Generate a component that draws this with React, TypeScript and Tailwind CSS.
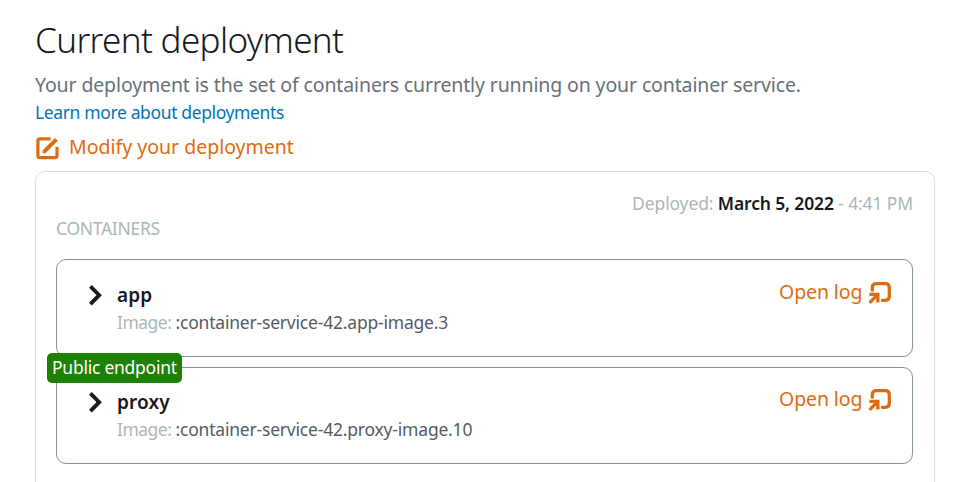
function EditIcon() {
  return (
    <svg className="block shrink-0" width="24" height="24" viewBox="0 0 24 24" fill="none" stroke="#dd6b10">
      <path d="M15.6 1.9H4.9Q2.9 1.9 2.9 3.9V18.7Q2.9 20.7 4.9 20.7H20Q22 20.7 22 18.7V10" strokeWidth="3.2" />
      <path d="M9.2 14.6L21.4 2.4" strokeWidth="4" />
      <path d="M7.6 12.9L11 16.3H7.6Z" fill="#dd6b10" stroke="none" />
    </svg>
  );
}

function OpenIcon() {
  return (
    <svg className="block shrink-0" width="24" height="24" viewBox="0 0 24 24" fill="none" stroke="#dd6b10" strokeWidth="3.3">
      <path d="M4.3 9.2V6.6Q4.3 2.6 8.3 2.6H17.3Q21.3 2.6 21.3 6.6V15.3Q21.3 19.3 17.3 19.3H14.4" strokeLinecap="round" />
      <path d="M1.4 13.3H9.9V21.6M9 14.2L1.6 21.8" strokeWidth="3.2" />
    </svg>
  );
}

function Chevron() {
  return (
    <svg className="block shrink-0" width="14" height="22" viewBox="0 0 14 22" fill="none" stroke="#16191f" strokeWidth="3.8">
      <path d="M2.4 2.3L11.2 11.2L2.4 20.1" />
    </svg>
  );
}

type ContainerProps = { name: string; image: string; badge?: string; bodyClass: string; heightClass: string };

function ContainerCard({ name, image, badge, bodyClass, heightClass }: ContainerProps) {
  return (
    <div className={`relative rounded-[10px] border border-[#879596] bg-white pr-5 pl-[31px] ${heightClass}`}>
      {badge && (
        <span className="absolute -top-[15px] -left-[10px] h-[30px] w-[135px] rounded-[5px] bg-[#1d8102] pl-[5px] text-[17.5px] leading-[29px] tracking-[-0.25px] text-white">
          {badge}
        </span>
      )}
      <div className={`flex ${bodyClass}`}>
        <div className="pt-1">
          <Chevron />
        </div>
        <div className="flex-1 pt-[1px] pl-[15px]">
          <div className="h-7 text-[19px] leading-7 font-semibold tracking-[0.15px] text-[#16191f]">{name}</div>
          <div className="h-7 text-[17.5px] leading-[27px] tracking-[-0.2px] text-[#545b64]">
            <span className="tracking-[-0.5px] text-[#aab7b8]">Image: </span>
            {image}
          </div>
        </div>
        <div className="-mt-[2px] flex h-7 text-[#dd6b10]">
          <span className="w-[89px] text-[19.5px] leading-7 tracking-[-0.1px]">Open log</span>
          <span className="pt-[3px]">
            <OpenIcon />
          </span>
        </div>
      </div>
    </div>
  );
}

export default function App() {
  return (
    <main className="h-[482px] w-[956px] overflow-hidden bg-white pr-[21px] pl-[35px] font-['Noto_Sans',sans-serif] whitespace-nowrap">
      <h1 className="h-16 pt-4 text-[35px] leading-[48px] font-light tracking-[-0.64px] text-[#16191f]">Current deployment</h1>
      <p className="mt-[7px] h-7 text-[19.5px] leading-7 tracking-[-0.13px] text-[#687078]">
        Your deployment is the set of containers currently running on your container service.
      </p>
      <a className="block h-7 text-[17.5px] leading-[27px] tracking-[-0.37px] text-[#0073bb]">Learn more about deployments</a>
      <div className="mt-[5px] flex h-8 text-[#dd6b10]">
        <span className="pt-[5px]">
          <EditIcon />
        </span>
        <span className="pl-[10px] text-[19.5px] leading-[30px]">Modify your deployment</span>
      </div>
      <section className="mt-[7px] flex h-[340px] flex-col rounded-[10px] border border-[#d5dbdb] pr-[21px] pl-5">
        <div className="mt-[17px] h-7 text-right text-[17.5px] leading-7 tracking-[-0.13px] text-[#aab7b8]">
          Deployed: <span className="font-semibold text-[#16191f]">March 5, 2022</span> - 4:41 PM
        </div>
        <div className="-mt-[3px] h-7 text-[17.5px] leading-7 tracking-[-0.3px] text-[#aab7b8]">CONTAINERS</div>
        <div className="mt-[17px] flex flex-col gap-[10px]">
          <ContainerCard name="app" image=":container-service-42.app-image.3" bodyClass="pt-5" heightClass="h-[98px]" />
          <ContainerCard name="proxy" image=":container-service-42.proxy-image.10" badge="Public endpoint" bodyClass="pt-[19px]" heightClass="h-[97px]" />
        </div>
      </section>
    </main>
  );
}
